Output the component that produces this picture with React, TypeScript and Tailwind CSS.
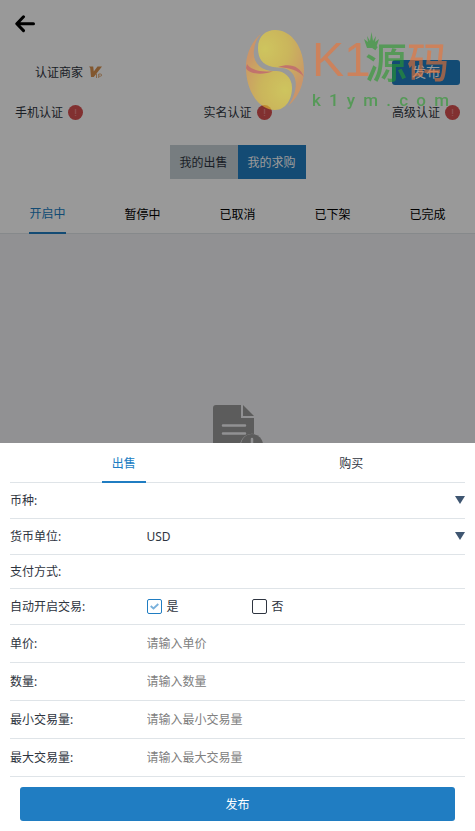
import React, { useState } from "react";

const verifications = ["手机认证", "实名认证", "高级认证"];
const statusTabs = ["开启中", "暂停中", "已取消", "已下架", "已完成"];
const amountFields = [
  { id: "price", label: "单价:", placeholder: "请输入单价" },
  { id: "amount", label: "数量:", placeholder: "请输入数量" },
  { id: "min", label: "最小交易量:", placeholder: "请输入最小交易量" },
  { id: "max", label: "最大交易量:", placeholder: "请输入最大交易量" },
];

function BackIcon() {
  return (
    <svg width="20" height="18" viewBox="0 0 20 18" fill="none" stroke="#000" strokeWidth="3" strokeLinecap="round" strokeLinejoin="round">
      <path d="M8.5 1.8 1.8 8.8l6.7 6.8M2.5 8.8h16" />
    </svg>
  );
}

function VipIcon() {
  return (
    <svg width="14" height="14" viewBox="0 0 14 14" aria-label="VIP">
      <path d="M0 1.500h4.200l.6 5L8.500 1.500H13L4.800 12H2L1.200 3z" fill="#d9924f" />
      <path d="M7.500 8.500V13M9.700 13V9h1.800a1 1 0 0 1 0 2.200H9.700" fill="none" stroke="#e0aa78" strokeWidth="1" />
    </svg>
  );
}

function AlertIcon() {
  return (
    <svg width="15" height="15" viewBox="0 0 15 15">
      <circle cx="7.500" cy="7.500" r="7.500" fill="#d85050" />
      <path d="M7.500 4v5M7.500 10v1" stroke="#e88080" strokeWidth="1.400" />
    </svg>
  );
}

function EmptyIcon() {
  return (
    <svg width="50" height="60" viewBox="0 0 50 60">
      <path d="M3 0h25v13h13v16a12 12 0 0 0-14 12v17H3a3 3 0 0 1-3-3V3a3 3 0 0 1 3-3z" fill="#999" />
      <path d="M30 0l11 11H30z" fill="#999" />
      <path d="M10 20.500h22M10 28.500h22" stroke="#f2f2f5" strokeWidth="2.500" strokeLinecap="round" />
      <circle cx="39" cy="40" r="11" fill="#999" />
      <path d="M39 34v8" stroke="#f2f2f5" strokeWidth="2.500" strokeLinecap="round" />
    </svg>
  );
}

function CaretIcon() {
  return (
    <svg width="10" height="10" viewBox="0 0 10 10" className="pointer-events-none col-start-1 row-start-1 justify-self-end">
      <path d="M0 0h10L5 8z" fill="#3f5671" />
    </svg>
  );
}

function Watermark() {
  return (
    <div className="pointer-events-none absolute top-7 right-[26px] flex gap-[6px] opacity-60">
      <svg width="60" height="84" viewBox="0 0 60 84">
        <defs>
          <radialGradient id="upper" gradientUnits="userSpaceOnUse" cx="19" cy="21" r="48">
            <stop offset="0" stopColor="#f2e238" />
            <stop offset="0.500" stopColor="#ecc934" />
            <stop offset="1" stopColor="#eb9348" />
          </radialGradient>
          <radialGradient id="lower" gradientUnits="userSpaceOnUse" cx="39" cy="62" r="48">
            <stop offset="0" stopColor="#f2e238" />
            <stop offset="0.500" stopColor="#ecc934" />
            <stop offset="1" stopColor="#eb9348" />
          </radialGradient>
        </defs>
        <path d="M29 2C46 2 58 20 58 42c0 15-6 28-16 36 9-12 11-28 2-35-5-4-11-3-17-4-11-2-15-9-15-19C12 8 20 2 29 2z" fill="url(#upper)" />
        <path d="M16 5C4 14-1 30 0 42c1 23 14 40 29 40 11 0 17-11 17-22s-8-17-16-17C16 44 6 35 8 22c1-8 4-13 8-17z" fill="url(#lower)" />
        <path d="M1 36c3 5 13 9 26 7-8 4-24 4-27-3z" fill="#dc5a50" />
        <path d="M32 39c12-4 22-1 26 10-6-7-14-9-26-10z" fill="#dc5a50" />
      </svg>
      <div className="flex flex-col">
        <div className="relative flex items-center font-['Noto_Sans_CJK_SC',sans-serif] text-[42px] leading-[64px]">
          <span className="w-[53px] font-['Liberation_Sans_Narrow','Liberation_Sans',sans-serif] text-5xl leading-[64px] text-[#ee7334]">K1</span>
          <span className="font-medium text-[#2a9a2e]">源</span>
          <span className="font-medium text-[#ee7334]">码</span>
          <svg width="15" height="17" viewBox="0 0 15 17" className="absolute top-1 left-13">
            <path d="M3 16 0 7l4 3-1-6 3 5 1.500-9L9 9l3-5-1 6 4-3-3 9z" fill="#2a9a2e" />
          </svg>
        </div>
        <div className="flex justify-between font-[Roboto,sans-serif] text-[17px] leading-4 font-medium text-[#2a9a2e]">
          {["k", "1", "y", "m", ".", "c", "o", "m"].map((char, i) => (
            <span key={i}>{char}</span>
          ))}
        </div>
      </div>
    </div>
  );
}

function SelectRow({ id, label, options }: { id: string; label: string; options: string[] }) {
  return (
    <div className="flex h-9 items-center border-b border-[#dfe4e8]">
      <label htmlFor={id} className="w-[30%]">
        {label}
      </label>
      <div className="grid flex-1 items-center">
        <select id={id} className="col-start-1 row-start-1 w-full appearance-none bg-transparent outline-none">
          {options.map((option) => (
            <option key={option}>{option}</option>
          ))}
        </select>
        <CaretIcon />
      </div>
    </div>
  );
}

function PublishSheet() {
  const [side, setSide] = useState("出售");
  const [autoOpen, setAutoOpen] = useState(true);

  return (
    <form className="fixed inset-x-0 bottom-0 bg-white px-[10px] pb-[10px] text-[#2e3440]">
      <div className="flex h-10 border-b border-[#dfe4e8]">
        {["出售", "购买"].map((name) => (
          <div key={name} className="flex flex-1 justify-center">
            <button
              type="button"
              onClick={() => setSide(name)}
              className={`h-10 border-b-2 px-[10px] pt-1 ${
                side === name ? "border-[#207dc2] text-[#207dc2]" : "border-transparent"
              }`}
            >
              {name}
            </button>
          </div>
        ))}
      </div>

      <SelectRow id="coin" label="币种:" options={[""]} />
      <SelectRow id="currency" label="货币单位:" options={["USD"]} />
      <div className="flex h-[34px] items-center border-b border-[#dfe4e8]">支付方式:</div>

      {/* Auto open */}
      <div className="flex h-9 items-center border-b border-[#dfe4e8]">
        <span className="w-[30%]">自动开启交易:</span>
        {[true, false].map((value) => (
          <label key={String(value)} className="flex w-[105px] items-center gap-[5px]">
            <span className="grid items-center justify-items-center">
              <input
                type="checkbox"
                checked={autoOpen === value}
                onChange={() => setAutoOpen(value)}
                className="col-start-1 row-start-1 size-[15px] appearance-none rounded-[2px] border border-[#2e3440] checked:border-[#207dc2]"
              />
              {autoOpen === value && (
                <svg width="9" height="7" viewBox="0 0 9 7" className="pointer-events-none col-start-1 row-start-1">
                  <path d="M.7 3l2.800 2.500L8.300 1" fill="none" stroke="#79b1dc" strokeWidth="1.800" />
                </svg>
              )}
            </span>
            {value ? "是" : "否"}
          </label>
        ))}
      </div>

      {amountFields.map((field) => (
        <div key={field.id} className="flex h-[38px] items-center border-b border-[#dfe4e8]">
          <label htmlFor={field.id} className="w-[30%]">
            {field.label}
          </label>
          <input id={field.id} placeholder={field.placeholder} className="min-w-0 flex-1 outline-none placeholder:text-[#808080]" />
        </div>
      ))}

      <div className="px-[10px] pt-[10px]">
        <button type="submit" className="h-[34px] w-full rounded-[3px] bg-[#207dc2] pt-0.5 text-white">
          发布
        </button>
      </div>
    </form>
  );
}

export default function App() {
  const [tab, setTab] = useState(statusTabs[0]);

  return (
    <div className="flex min-h-screen flex-col bg-[#f2f2f5] font-['Noto_Sans','Noto_Sans_CJK_SC',sans-serif] text-xs text-[#2e3440]">
      <header className="bg-white">
        <div className="flex h-12 items-center px-[15px]">
          <button aria-label="返回">
            <BackIcon />
          </button>
        </div>

        <div className="flex h-12 items-center justify-between pr-[15px] pl-[35px]">
          <span className="flex items-center gap-[6px]">
            <span className="pt-0.5">认证商家</span>
            <VipIcon />
          </span>
          <button className="h-[25px] w-[68px] rounded-[3px] bg-[#207dc2] text-sm text-white">发布</button>
        </div>

        <div className="flex h-8 items-center justify-between px-[15px]">
          {verifications.map((name) => (
            <span key={name} className="flex items-center gap-[5px]">
              <span className="pt-0.5">{name}</span>
              <AlertIcon />
            </span>
          ))}
        </div>

        <div className="flex justify-center pt-[17px] pb-4">
          <button className="h-[34px] w-[68px] bg-[#c6d1d6] pt-0.5">我的出售</button>
          <button className="h-[34px] w-[68px] bg-[#207dc2] pt-0.5 text-white">我的求购</button>
        </div>

        <nav className="flex h-[39px] border-b border-[#dfe4e8]">
          {statusTabs.map((name) => (
            <div key={name} className="flex flex-1 justify-center">
              <button
                onClick={() => setTab(name)}
                className={`h-[39px] ${
                  tab === name ? "border-b-2 border-[#207dc2] text-[#207dc2]" : "text-black"
                }`}
              >
                {name}
              </button>
            </div>
          ))}
        </nav>
      </header>

      <main className="flex flex-1 justify-center pt-[171px]">
        <EmptyIcon />
      </main>

      <div className="fixed inset-0 bg-black/40" />
      <PublishSheet />
      <Watermark />
    </div>
  );
}
